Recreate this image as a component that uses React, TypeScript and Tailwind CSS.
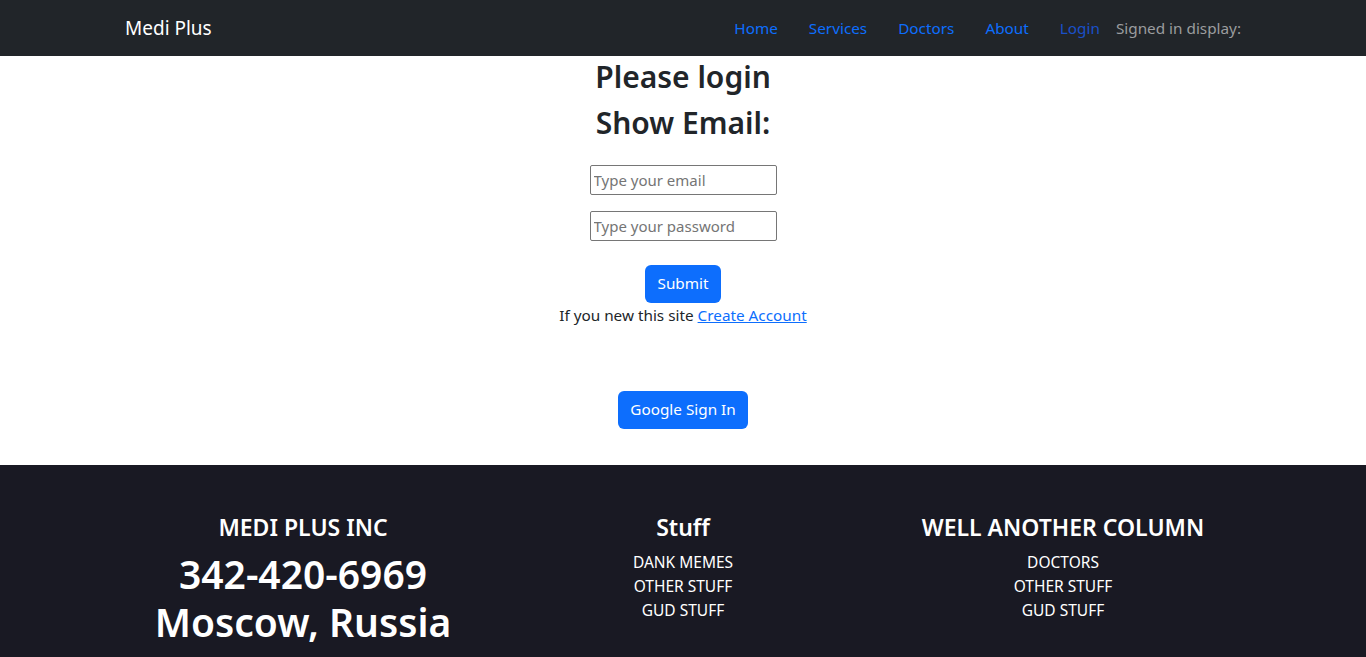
const NAV_LINKS = ['Home', 'Services', 'Doctors', 'About'];

const Navbar = () => (
    <nav className="h-[56px] bg-[#212529]">
        <div className="mx-auto flex h-full max-w-[1140px] items-center justify-between px-3 pt-[1px]">
            <span className="text-[19px] text-white">Medi Plus</span>
            <div className="flex items-center text-[15.3px]">
                <div className="flex items-center gap-[31px]">
                    {NAV_LINKS.map(link => (
                        <a key={link} href="#" className="text-[#0d6efd]">{link}</a>
                    ))}
                    <a href="#" className="text-[#1a50c8]">Login</a>
                </div>
                <span className="ml-4 text-[#9b9d9f]">Signed in display:</span>
            </div>
        </div>
    </nav>
);

const LoginForm = () => (
    <main className="flex flex-col items-center bg-white pb-[36px] text-[#212529]">
        <h2 className="mt-[2px] mb-2 text-[30px] font-semibold leading-[38.4px]">Please login</h2>
        <h2 className="mb-2 text-[30px] font-semibold leading-[38.4px]">Show Email:</h2>
        <form className="mt-[14px] flex flex-col items-center" onSubmit={e => e.preventDefault()}>
            <input
                type="email"
                placeholder="Type your email"
                className="h-[30px] w-[187px] rounded-[2px] border border-[#767676] px-[3px] text-[15px] placeholder:text-[#757575]"
            />
            <input
                type="password"
                placeholder="Type your password"
                className="mt-4 h-[30px] w-[187px] rounded-[2px] border border-[#767676] px-[3px] text-[15px] placeholder:text-[#757575]"
            />
            <button
                type="submit"
                className="mt-6 h-[38px] w-[76px] rounded-[6px] bg-[#0d6efd] text-[15.3px] text-white"
            >
                Submit
            </button>
        </form>
        <p className="text-[15.3px] leading-6">
            If you new this site <a href="#" className="text-[#0d6efd] underline">Create Account</a>
        </p>
        <button className="mt-16 h-[38px] w-[130px] rounded-[6px] bg-[#0d6efd] text-[15.3px] text-white">
            Google Sign In
        </button>
    </main>
);

const FooterColumn = ({ title, items }: { title: string; items: string[] }) => (
    <div className="flex flex-col items-center px-3">
        <h4 className="mb-2 text-[23px] font-semibold leading-[28.8px]">{title}</h4>
        {items.map(item => (
            <span key={item} className="text-[15.5px] leading-6">{item}</span>
        ))}
    </div>
);

const Footer = () => (
    <footer className="bg-[#191923] pt-[48px] pb-12 text-white">
        <div className="mx-auto grid max-w-[1140px] grid-cols-3">
            <div className="flex flex-col items-center px-3">
                <h4 className="mb-2 text-[23px] font-semibold leading-[28.8px]">MEDI PLUS INC</h4>
                <h1 className="text-center text-[39px] font-semibold leading-[48px]">
                    342-420-6969<br />Moscow, Russia
                </h1>
            </div>
            <FooterColumn title="Stuff" items={['DANK MEMES', 'OTHER STUFF', 'GUD STUFF']} />
            <FooterColumn title="WELL ANOTHER COLUMN" items={['DOCTORS', 'OTHER STUFF', 'GUD STUFF']} />
        </div>
    </footer>
);

export default function App() {
    return (
        <div className="min-h-screen bg-white font-['Noto_Sans',sans-serif]">
            <Navbar />
            <LoginForm />
            <Footer />
        </div>
    );
}
